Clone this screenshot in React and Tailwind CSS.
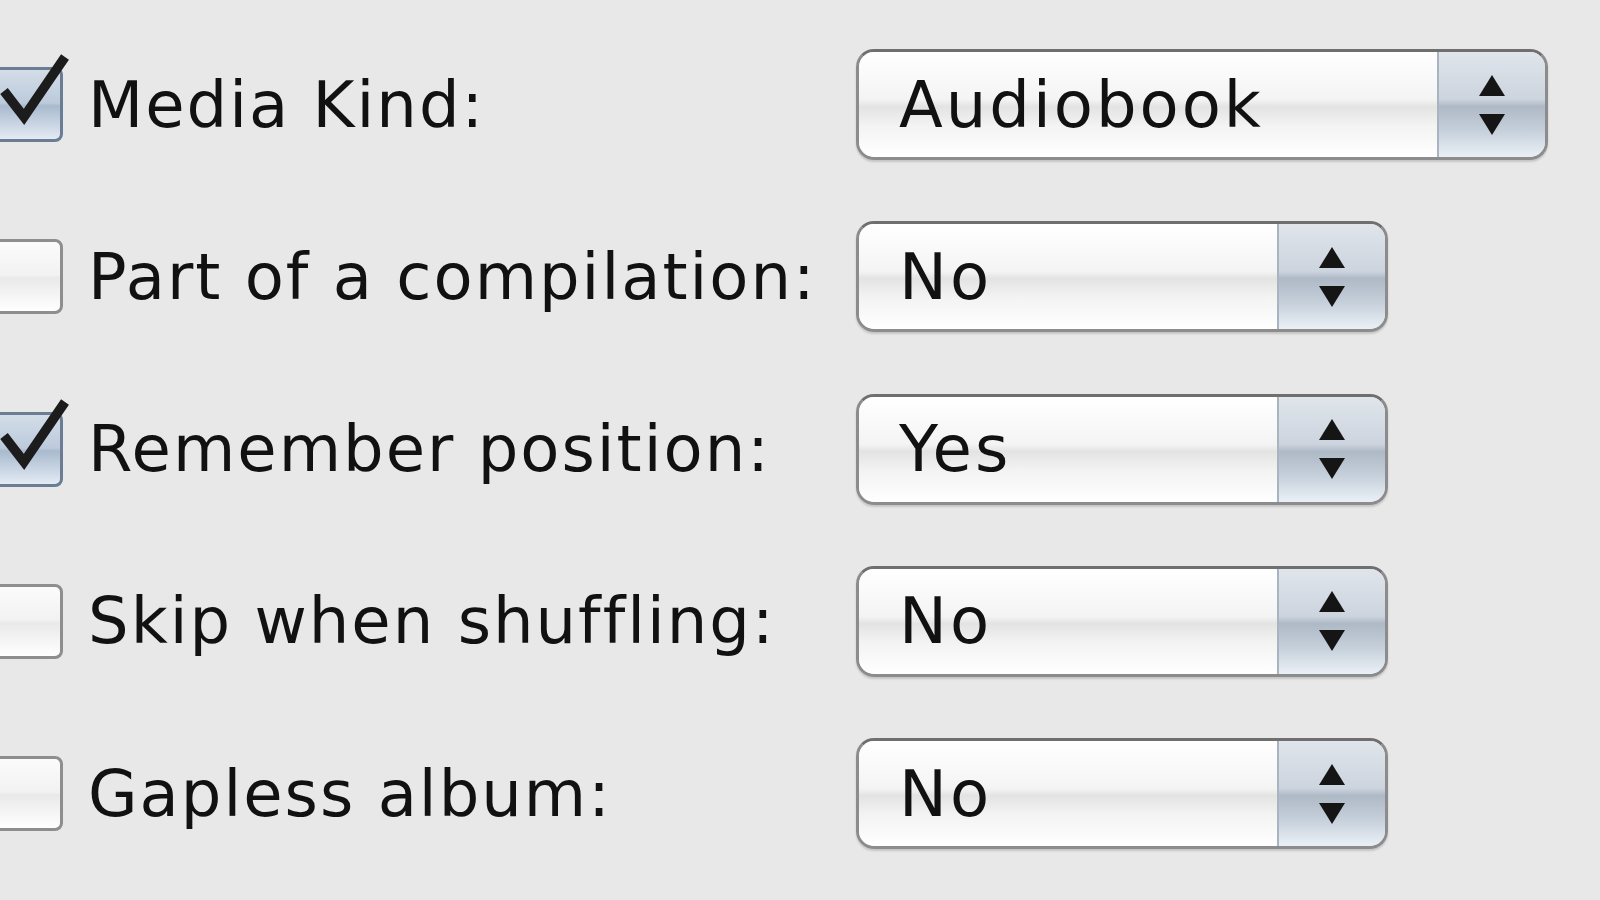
import React from "react";

function CheckBox({ checked }) {
  return (
    <div className="relative w-[76px] h-[75px] ml-[-13px] shrink-0">
      <div
        className={
          "absolute inset-0 rounded-[8px] border-[3px] " +
          (checked
            ? "border-[#6a7d95] bg-[linear-gradient(to_bottom,#d3dde8_0%,#bccadb_48%,#a9bace_52%,#e3ebf4_100%)]"
            : "border-[#8e8e8e] bg-[linear-gradient(to_bottom,#fbfbfb_0%,#f2f2f2_48%,#e9e9e9_52%,#ffffff_100%)]")
        }
      />
      {checked && (
        <svg
          className="absolute left-0 top-[-14px] overflow-visible"
          width="90"
          height="90"
          viewBox="0 0 90 90"
        >
          <path
            d="M17 38 L37 64 L78 4"
            fill="none"
            stroke="#1c1c1c"
            strokeWidth="9.5"
            strokeLinecap="butt"
            strokeLinejoin="miter"
          />
        </svg>
      )}
    </div>
  );
}

function Select({ value, wide }) {
  return (
    <div
      className={
        "flex h-[111px] rounded-[18px] border-[3px] border-[#8c8c8c] border-t-[#6f6f6f] overflow-hidden shadow-[0_2px_2px_rgba(0,0,0,0.15)] " +
        (wide ? "w-[692px]" : "w-[532px]")
      }
    >
      <div className="flex-1 flex items-center pl-[40px] bg-[linear-gradient(to_bottom,#ffffff_0%,#f4f4f4_45%,#e3e3e3_52%,#f3f3f3_70%,#ffffff_100%)]">
        <span className="text-[64px] tracking-[3px] text-[#111] leading-none">{value}</span>
      </div>
      <div className="w-[108px] border-l-[2px] border-[#aab4c1] border-t-[3px] border-t-[#5b6080] -mt-[3px] flex flex-col items-center justify-center gap-[18px] bg-[linear-gradient(to_bottom,#e0e5eb_0%,#ccd4de_45%,#aeb9c6_52%,#c6d0db_75%,#eaf0f6_100%)]">
        <svg width="26" height="21" viewBox="0 0 26 21">
          <path d="M13 0 L26 21 L0 21 Z" fill="#151515" />
        </svg>
        <svg width="26" height="21" viewBox="0 0 26 21">
          <path d="M0 0 L26 0 L13 21 Z" fill="#151515" />
        </svg>
      </div>
    </div>
  );
}

const rows = [
  { label: "Media Kind:", checked: true, value: "Audiobook", wide: true },
  { label: "Part of a compilation:", checked: false, value: "No" },
  { label: "Remember position:", checked: true, value: "Yes" },
  { label: "Skip when shuffling:", checked: false, value: "No" },
  { label: "Gapless album:", checked: false, value: "No" },
];

export default function App() {
  return (
    <div
      className="w-[1600px] h-[900px] overflow-hidden bg-[#e8e8e8] pt-[49px] flex flex-col gap-[61.25px]"
      style={{ fontFamily: '"DejaVu Sans", "Liberation Sans", sans-serif' }}
    >
      {rows.map((r) => (
        <div key={r.label} className="flex items-center h-[111px]">
          <div className="w-[856px] flex items-center shrink-0">
            <CheckBox checked={r.checked} />
            <span className="ml-[25px] text-[64px] tracking-[2px] text-[#111] leading-none whitespace-nowrap">
              {r.label}
            </span>
          </div>
          <Select value={r.value} wide={r.wide} />
        </div>
      ))}
    </div>
  );
}
